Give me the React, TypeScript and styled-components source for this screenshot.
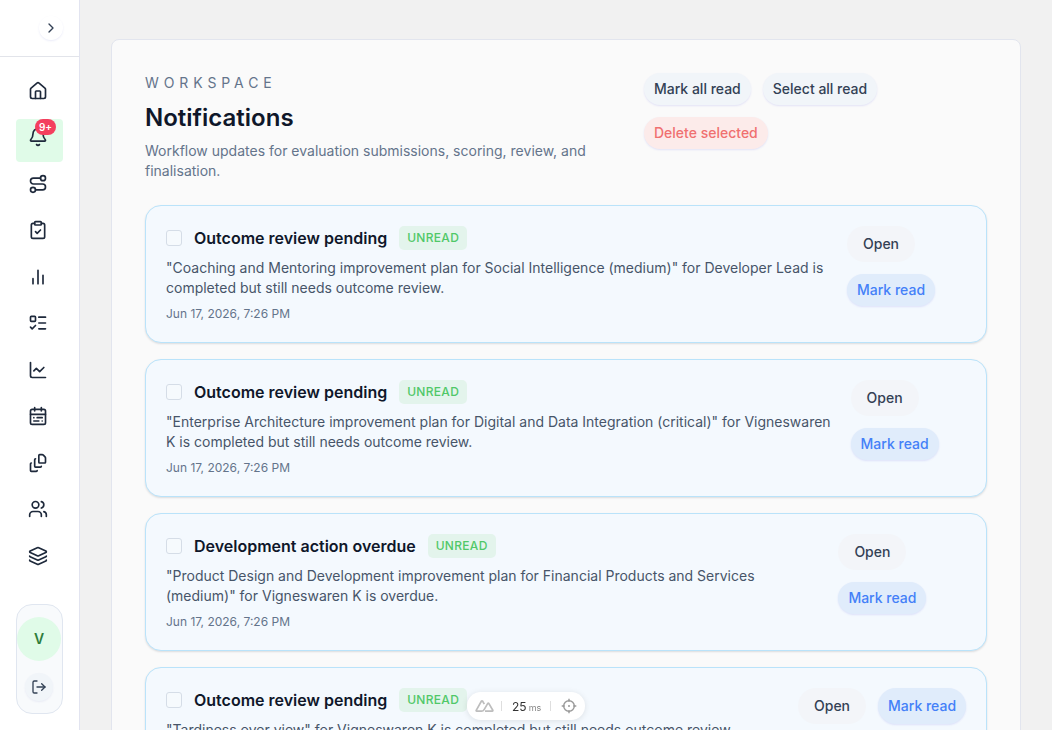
import React from "react";
import styled, { createGlobalStyle } from "styled-components";
import {
  Bell, CalendarRange, ChartLine, ChevronRight, ClipboardCheck, FileStack,
  House, Layers, ListTodo, LogOut, Route, Users,
} from "lucide-react";

const Global = createGlobalStyle`
  *, *::before, *::after { box-sizing: border-box; }
  html, body { margin: 0; height: 730px; overflow: hidden; background: #f1f1f1; }
  body { font-family: Inter, "Liberation Sans", sans-serif; font-size: 14px; color: #0f172a; }
  button { font-family: inherit; border: 0; margin: 0; }
  h1, h2, p { margin: 0; }
`;

const Shell = styled.div`
  display: flex;
  height: 730px;
  overflow: hidden;
`;

const Sidebar = styled.aside`
  display: flex;
  flex-direction: column;
  width: 80px;
  flex: none;
  background: #fff;
  border-right: 1px solid #e2e4f0;
`;

const SidebarTop = styled.div`
  display: flex;
  align-items: center;
  justify-content: flex-end;
  height: 57px;
  padding-right: 16px;
  border-bottom: 1px solid #e2e4ea;
`;

const ToggleButton = styled.button`
  display: grid;
  place-items: center;
  width: 24px;
  height: 24px;
  padding: 0;
  border-radius: 50%;
  background: #fff;
  color: #334155;
  box-shadow: 0 1px 2px rgba(60, 70, 200, 0.1);
`;

const Nav = styled.nav`
  display: flex;
  flex-direction: column;
  gap: 4px;
  padding: 15.9px 16px 0;
`;

const NavItem = styled.a<{ $active?: boolean }>`
  display: flex;
  width: 47px;
  height: 42.5px;
  padding: 8px 0 0 12px;
  border-radius: 4px;
  color: #1e293b;
  background: ${(p) => (p.$active ? "#e0fbe8" : "transparent")};
`;

const IconSlot = styled.span`
  position: relative;
  display: block;
  height: 20px;
  svg { display: block; }
`;

const Count = styled.span`
  position: absolute;
  left: 7px;
  top: -8px;
  width: 21px;
  height: 16px;
  border-radius: 8px;
  background: #f43f5e;
  color: #fff;
  font-size: 10px;
  font-weight: 600;
  line-height: 16px;
  text-align: center;
`;

const UserBox = styled.div`
  display: flex;
  flex-direction: column;
  align-items: center;
  width: 47px;
  height: 110px;
  margin: auto 0 16px 16px;
  padding: 12px 1px 0 0;
  gap: 12px;
  border: 1px solid #e0e6f0;
  border-radius: 16px;
  background: #f8fafc;
`;

const Avatar = styled.div`
  width: 44px;
  height: 44px;
  flex: none;
  border-radius: 50%;
  background: #e0fbe8;
  color: #2f7d3c;
  font-size: 14px;
  font-weight: 600;
  line-height: 44px;
  text-align: center;
`;

const LogoutButton = styled.button`
  display: grid;
  place-items: center;
  width: 28px;
  height: 28px;
  padding: 0;
  border-radius: 50%;
  background: #f1f5f9;
  color: #334155;
  box-shadow: 0 1px 2px rgba(60, 70, 160, 0.08);
`;

const Main = styled.main`
  flex: 1;
  min-width: 0;
  padding: 39px 31px 0;
`;

const Panel = styled.section`
  height: 900px;
  padding: 33px;
  border: 1px solid #e2e5ee;
  border-radius: 8px;
  background: #fafafa;
`;

const Header = styled.header`
  display: flex;
  height: 132px;
`;

const Heading = styled.div`
  width: 499px;
  flex: none;
`;

const Eyebrow = styled.p`
  color: #64748b;
  font-size: 14px;
  line-height: 20px;
  letter-spacing: 4.9px;
`;

const Title = styled.h1`
  margin-top: 9px;
  font-size: 24px;
  line-height: 32px;
  font-weight: 600;
`;

const Subtitle = styled.p`
  width: 460px;
  margin-top: 7px;
  color: #64748b;
  line-height: 20px;
`;

const HeaderActions = styled.div`
  display: flex;
  flex-wrap: wrap;
  align-content: flex-start;
  width: 250px;
  gap: 12px;
`;

const tones = {
  slate: { bg: "#f1f5f9", fg: "#334155" },
  danger: { bg: "#fcebea", fg: "#f07070" },
  blue: { bg: "#e0ecfb", fg: "#4480f8" },
  plain: { bg: "#f3f5f9", fg: "#334155" },
};

const PillButton = styled.button<{ $tone: keyof typeof tones }>`
  min-height: 32px;
  padding: 0 ${(p) => (p.$tone === "plain" ? 16 : 10)}px;
  height: ${(p) => (p.$tone === "plain" ? "36px" : "auto")};
  border-radius: 18px;
  background: ${(p) => tones[p.$tone].bg};
  color: ${(p) => tones[p.$tone].fg};
  font-size: 14px;
  font-weight: 500;
  line-height: 20px;
  white-space: nowrap;
  box-shadow: ${(p) => (p.$tone === "plain" ? "none" : "0 1px 2px rgba(60, 60, 220, 0.12)")};
`;

const List = styled.div`
  display: flex;
  flex-direction: column;
  gap: 16px;
`;

const Card = styled.article`
  display: flex;
  height: 138px;
  padding: 20px;
  border: 1px solid #bae3fa;
  border-radius: 16px;
  background: #f4f9fe;
  box-shadow: 0 1px 2px rgba(15, 23, 42, 0.13);
`;

const CardBody = styled.div<{ $width: number }>`
  width: ${(p) => p.$width}px;
  flex: none;
`;

const CardHead = styled.div`
  display: flex;
  align-items: center;
  height: 24px;
`;

const Check = styled.input`
  appearance: none;
  width: 16px;
  height: 16px;
  margin: 0 12px 0 0;
  border: 1px solid #d5dde7;
  border-radius: 3px;
  background: #f6fafd;
`;

const CardTitle = styled.h2`
  font-size: 16px;
  line-height: 24px;
  font-weight: 600;
`;

const Tag = styled.span`
  height: 24px;
  margin-left: 12px;
  padding: 0 8px;
  border-radius: 5px;
  background: #e3f4ec;
  color: #50c868;
  font-size: 12px;
  font-weight: 500;
  line-height: 24px;
  letter-spacing: 0.3px;
`;

const Message = styled.p`
  margin-top: 8px;
  color: #475569;
  line-height: 20px;
  white-space: nowrap;
`;

const Stamp = styled.p`
  margin-top: 8px;
  color: #64748b;
  font-size: 12px;
  line-height: 16px;
`;

const CardActions = styled.div<{ $inline?: boolean }>`
  display: flex;
  flex-direction: ${(p) => (p.$inline ? "row" : "column")};
  align-items: ${(p) => (p.$inline ? "stretch" : "flex-start")};
  align-self: flex-start;
  gap: 12px;
`;

const DevBar = styled.div`
  position: fixed;
  left: 467px;
  top: 692px;
  display: flex;
  align-items: center;
  width: 118px;
  height: 28px;
  padding-left: 8px;
  border-radius: 14px;
  background: #fff;
  color: #333;
  font-size: 12px;
  box-shadow: 0 1px 6px rgba(0, 0, 0, 0.1);
  svg { flex: none; }
`;

const Divider = styled.i`
  flex: none;
  width: 1px;
  height: 10px;
  margin: 0 10px 0 7px;
  background: #dedede;
`;

const Timing = styled.span`
  display: flex;
  align-items: baseline;
  width: 31px;
  flex: none;
`;

const Unit = styled.small`
  margin-left: 2px;
  color: #888;
  font-size: 9px;
`;

const BarsIcon = ({ size }: { size: number }) => (
  <svg width={size} height={size} viewBox="0 0 24 24" fill="none" stroke="currentColor" strokeWidth="2" strokeLinecap="round">
    <path d="M18 20V10M12 20V4M6 20v-6" />
  </svg>
);

const PeaksIcon = () => (
  <svg width="19" height="14" viewBox="0 0 19 14" fill="none" stroke="#bdbdbd" strokeWidth="1.7" strokeLinejoin="round">
    <path d="M9.3 5.1 7.500 2a.6.6 0 0 0-1 0L1.200 11.300a.6.6 0 0 0 .5.9H6.500Q8.200 12.200 9.100 10.600L12.800 4.400a.6.6 0 0 1 1 0l4 6.900a.6.6 0 0 1-.5.9H10" />
  </svg>
);

const TargetIcon = () => (
  <svg width="16" height="16" viewBox="0 0 16 16" fill="none" stroke="#999" strokeWidth="1.4">
    <circle cx="8" cy="8" r="5.3" />
    <path d="M8 .7v3M8 12.300v3M.7 8h3M12.300 8h3" />
    <circle cx="8" cy="8" r="1" fill="#999" stroke="none" />
  </svg>
);

const navIcons = [House, Bell, Route, ClipboardCheck, BarsIcon, ListTodo, ChartLine, CalendarRange, FileStack, Users, Layers];

const items = [
  {
    title: "Outcome review pending",
    lines: ['"Coaching and Mentoring improvement plan for Social Intelligence (medium)" for Developer Lead is', "completed but still needs outcome review."],
    width: 681,
  },
  {
    title: "Outcome review pending",
    lines: ['"Enterprise Architecture improvement plan for Digital and Data Integration (critical)" for Vigneswaren', "K is completed but still needs outcome review."],
    width: 684.6,
  },
  {
    title: "Development action overdue",
    lines: ['"Product Design and Development improvement plan for Financial Products and Services', '(medium)" for Vigneswaren K is overdue.'],
    width: 672.4,
  },
  {
    title: "Outcome review pending",
    lines: ['"Tardiness over view" for Vigneswaren K is completed but still needs outcome review.'],
    width: 632,
    inline: true,
  },
];

export default function App() {
  return (
    <>
      <Global />
      <Shell>
        <Sidebar>
          <SidebarTop>
            <ToggleButton aria-label="Expand"><ChevronRight size={16} /></ToggleButton>
          </SidebarTop>
          <Nav>
            {navIcons.map((Icon, i) => (
              <NavItem key={i} $active={i === 1}>
                <IconSlot>
                  <Icon size={20} />
                  {i === 1 && <Count>9+</Count>}
                </IconSlot>
              </NavItem>
            ))}
          </Nav>
          <UserBox>
            <Avatar>V</Avatar>
            <LogoutButton aria-label="Log out"><LogOut size={16} /></LogoutButton>
          </UserBox>
        </Sidebar>
        <Main>
          <Panel>
            <Header>
              <Heading>
                <Eyebrow>WORKSPACE</Eyebrow>
                <Title>Notifications</Title>
                <Subtitle>Workflow updates for evaluation submissions, scoring, review, and finalisation.</Subtitle>
              </Heading>
              <HeaderActions>
                <PillButton $tone="slate">Mark all read</PillButton>
                <PillButton $tone="slate">Select all read</PillButton>
                <PillButton $tone="danger">Delete selected</PillButton>
              </HeaderActions>
            </Header>
            <List>
              {items.map((item, i) => (
                <Card key={i}>
                  <CardBody $width={item.width}>
                    <CardHead>
                      <Check type="checkbox" />
                      <CardTitle>{item.title}</CardTitle>
                      <Tag>UNREAD</Tag>
                    </CardHead>
                    <Message>
                      {item.lines.map((line, n) => (
                        <React.Fragment key={n}>{n > 0 && <br />}{line}</React.Fragment>
                      ))}
                    </Message>
                    <Stamp>Jun 17, 2026, 7:26 PM</Stamp>
                  </CardBody>
                  <CardActions $inline={item.inline}>
                    <PillButton $tone="plain">Open</PillButton>
                    <PillButton $tone="blue">Mark read</PillButton>
                  </CardActions>
                </Card>
              ))}
            </List>
          </Panel>
        </Main>
      </Shell>
      <DevBar>
        <PeaksIcon />
        <Divider />
        <Timing>25<Unit>ms</Unit></Timing>
        <Divider />
        <TargetIcon />
      </DevBar>
    </>
  );
}
